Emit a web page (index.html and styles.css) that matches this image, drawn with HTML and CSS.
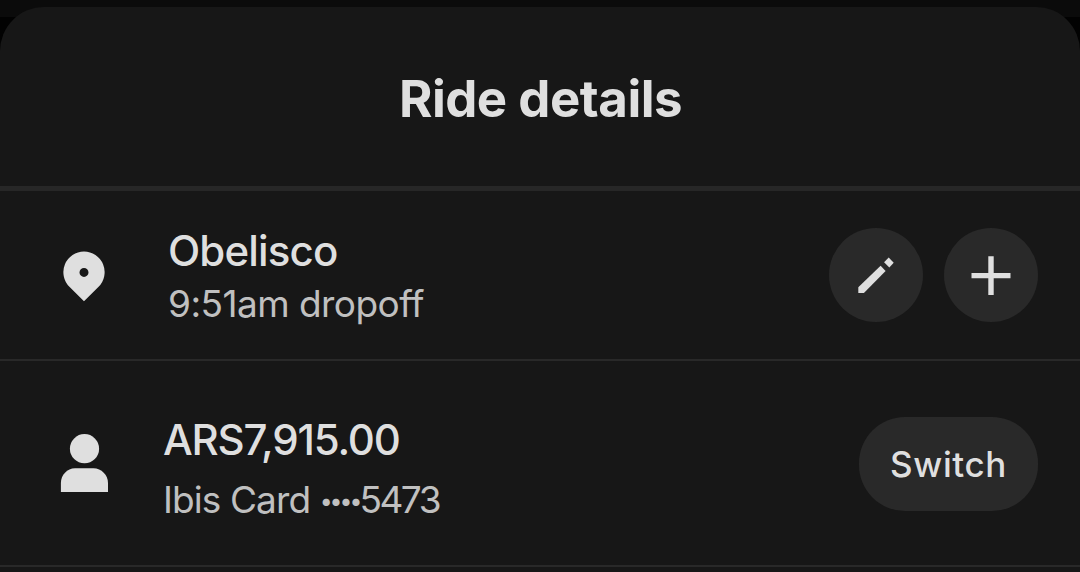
FILE: index.html
```html
<!DOCTYPE html>
<html lang="en">
<head>
  <meta charset="UTF-8" />
  <title>Ride details</title>
  <meta name="viewport" content="width=device-width, initial-scale=1.0" />
  <link rel="stylesheet" href="styles.css">
</head>
<body>

  <main class="sheet">
    <header class="sheet-header">
      <h1>Ride details</h1>
    </header>

    <section class="row dropoff">
      <svg class="row-icon" width="48" height="60" viewBox="0 0 48 60">
        <path fill="#dfdfdf" fill-rule="evenodd" d="M24 5.5A20.7 20.7 0 0 0 9.4 40.8L24 55.2 38.6 40.8A20.7 20.7 0 0 0 24 5.5ZM24 21.9a4.5 4.5 0 1 1 0 9 4.5 4.5 0 0 1 0-9Z" />
      </svg>
      <div class="row-text">
        <h2>Obelisco</h2>
        <p>9:51am dropoff</p>
      </div>
      <div class="actions">
        <button class="round-btn" aria-label="Edit">
          <svg width="94" height="94" viewBox="0 0 94 94" fill="#dfdfdf">
            <path d="M29.3 59.3 51.6 37.8 56.6 43 34.9 64.9H29.3Z" />
            <path d="M59.7 29.5 64.7 34.7 60.3 39.6 55.1 34.3Z" />
          </svg>
        </button>
        <button class="round-btn" aria-label="Add">
          <svg width="94" height="94" viewBox="0 0 94 94" fill="#dfdfdf">
            <path d="M44.3 28.2h5.4V45h16.8v5.2H49.7V67h-5.4V50.2H27.5V45h16.8Z" />
          </svg>
        </button>
      </div>
    </section>

    <section class="row payment">
      <svg class="row-icon" width="48" height="60" viewBox="0 0 48 60" fill="#dfdfdf">
        <circle cx="24.5" cy="14.7" r="14.6" />
        <path d="M.9 57.9V49C.9 41.2 7.2 34.3 15 34.3h18.5C41.4 34.3 48 41.2 48 49v8.9Z" />
      </svg>
      <div class="row-text">
        <h2>ARS7,915.00</h2>
        <p>Ibis Card <span class="dots">••••</span><span class="digits">5473</span></p>
      </div>
      <button class="switch-btn">Switch</button>
    </section>
  </main>

</body>
</html>
```
FILE: styles.css
```css
body {
  margin: 0;
  height: 572px;
  padding-top: 7px;
  box-sizing: border-box;
  overflow: hidden;
  background: linear-gradient(#0b0b0b 17px, #020202 17px);
  font-family: Inter, "Liberation Sans", sans-serif;
  color: #dfdfdf;
}

h1, h2, p {
  margin: 0;
  white-space: nowrap;
}

button {
  border: none;
  padding: 0;
  background: #292929;
  color: #dfdfdf;
  font-family: inherit;
}

.sheet {
  height: 565px;
  background: #171717;
  border-radius: 44px 44px 0 0;
}

.sheet-header {
  height: 179px;
  border-bottom: 5px solid #272727;
  text-align: center;
}

h1 {
  padding-top: 61px;
  padding-left: 1px;
  font-size: 51px;
  line-height: 62px;
  font-weight: 700;
  letter-spacing: -0.5px;
}

.row {
  display: flex;
  align-items: flex-start;
  box-sizing: border-box;
  padding: 0 42px 0 60px;
  border-bottom: 2px solid #292929;
}

.row-icon {
  flex: none;
}

.row-text {
  flex: 1;
}

h2 {
  font-size: 42px;
  line-height: 54px;
  font-weight: 500;
  letter-spacing: -0.85px;
}

p {
  font-size: 37px;
  line-height: 48px;
  letter-spacing: -0.55px;
  color: #c0c0c0;
}

.dropoff {
  height: 170px;
}

.dropoff .row-icon {
  margin-top: 55px;
}

.dropoff .row-text {
  padding: 33px 0 0 60px;
}

.dropoff p {
  margin-top: 2px;
}

.payment {
  height: 206px;
}

.payment .row-icon {
  margin-top: 73px;
}

.payment .row-text {
  padding: 52px 0 0 55px;
}

.payment h2 {
  letter-spacing: -1.2px;
}

.payment p {
  margin-top: 9px;
  letter-spacing: -0.9px;
}

.actions {
  display: flex;
  gap: 21px;
  padding-top: 37px;
}

.round-btn {
  width: 94px;
  height: 94px;
  border-radius: 50%;
}

.round-btn svg {
  display: block;
}

.switch-btn {
  width: 179px;
  height: 94px;
  margin-top: 56px;
  border-radius: 46px;
  font-size: 35px;
  font-weight: 500;
  letter-spacing: 0.6px;
}

.payment .dots {
  font-size: 23px;
  line-height: 1;
  letter-spacing: -3px;
  vertical-align: 4px;
}

.payment .digits {
  letter-spacing: -2.5px;
}
```
